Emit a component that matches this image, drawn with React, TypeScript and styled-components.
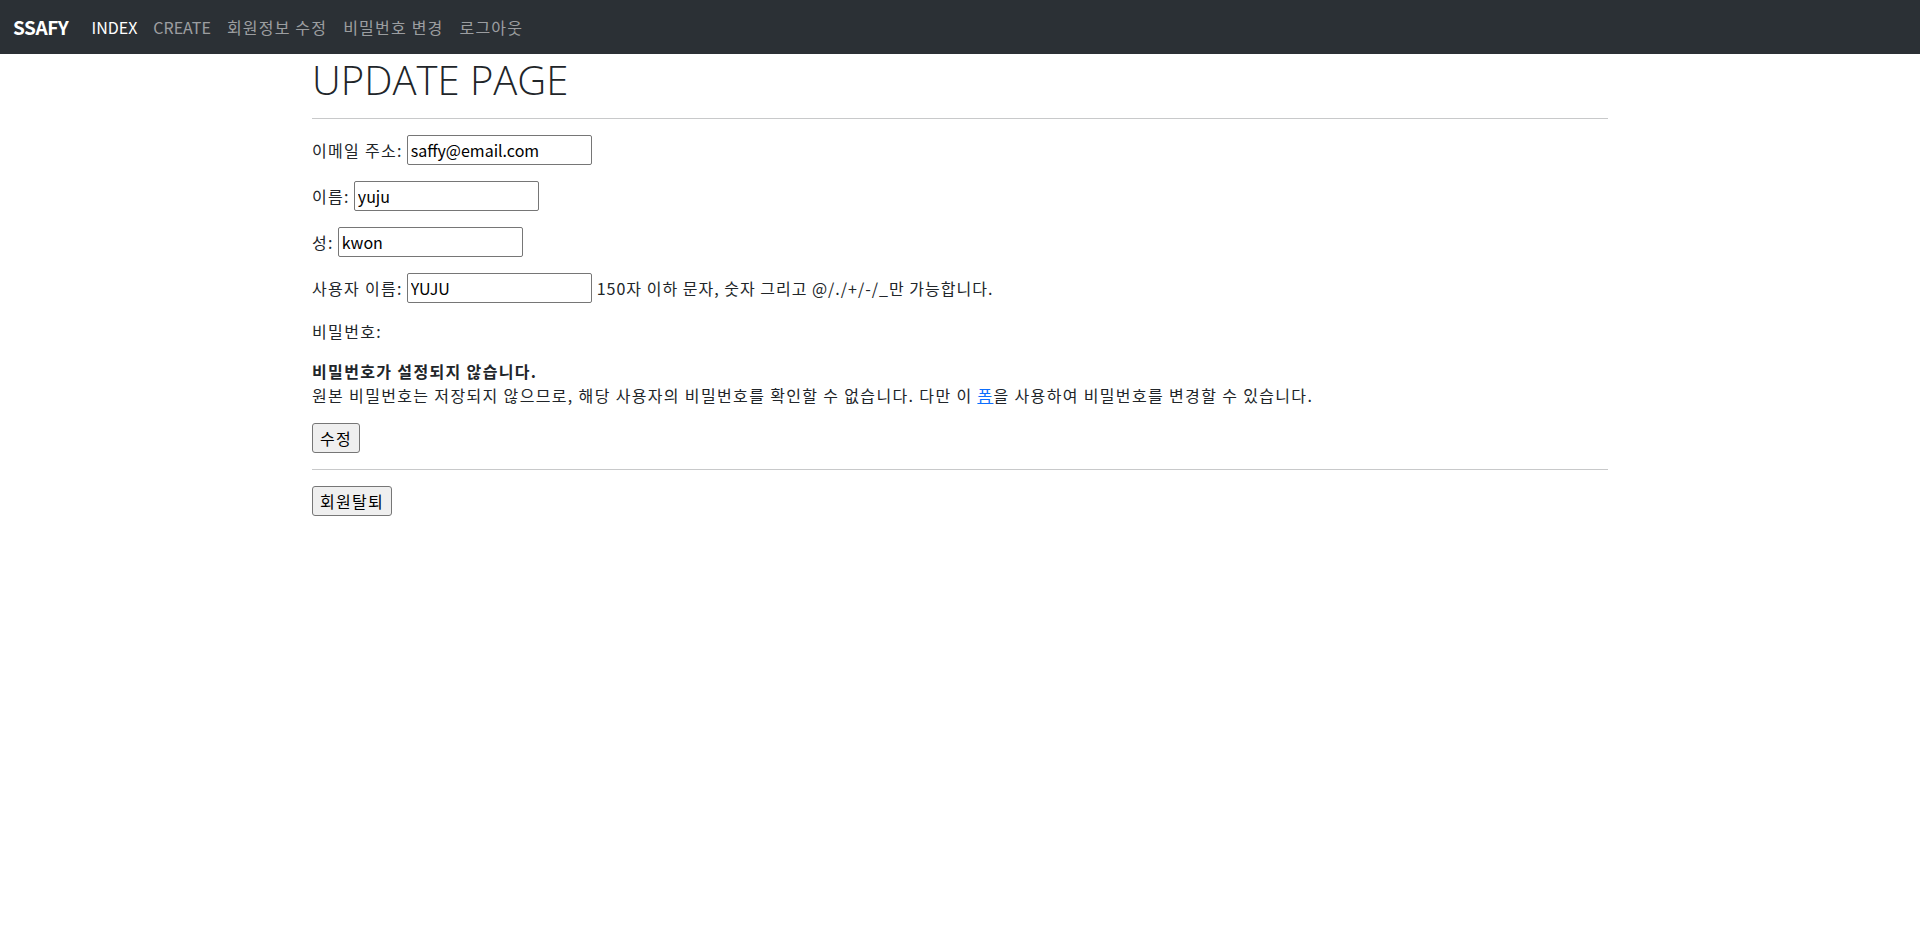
import styled, { createGlobalStyle } from "styled-components";

const GlobalStyle = createGlobalStyle`
  * {
    box-sizing: border-box;
  }
  body {
    margin: 0;
    font-family: "Noto Sans CJK KR", "Noto Sans", sans-serif;
    font-size: 16px;
    line-height: 24px;
    letter-spacing: 1.3px;
    color: #212529;
    background: #fff;
  }
`;

const Navbar = styled.nav`
  display: flex;
  align-items: center;
  height: 54px;
  padding: 0 13px;
  background: #2b3035;
`;

const Brand = styled.a`
  font-size: 19px;
  font-weight: 700;
  letter-spacing: -0.4px;
  color: #fff;
  margin-right: 15px;
  text-decoration: none;
`;

const NavList = styled.div`
  display: flex;
`;

const NavLink = styled.a<{ $active?: boolean; $latin?: boolean }>`
  padding: 8px;
  color: ${(p) => (p.$active ? "#fff" : "rgba(255, 255, 255, 0.55)")};
  letter-spacing: ${(p) => (p.$latin ? "0" : "1.2px")};
  text-decoration: none;
`;

const Container = styled.main`
  width: 1320px;
  margin: 0 auto;
  padding: 0 12px;
`;

const Title = styled.h1`
  margin: 0;
  padding-top: 4px;
  font-family: "Open Sans", "Noto Sans", sans-serif;
  font-size: 40px;
  font-weight: 300;
  line-height: 44px;
  letter-spacing: 0;
`;

const Divider = styled.hr`
  margin: 16px 0;
  border: 0;
  border-top: 1px solid #c8c9ca;
`;

const Field = styled.p`
  margin: 0 0 16px;
  display: flex;
  align-items: center;
  gap: 4px;
  min-height: 30px;
`;

const Text = styled.p`
  margin: 0 0 16px;
  letter-spacing: 1.35px;
`;

const Input = styled.input`
  width: 185px;
  height: 30px;
  padding: 1px 3px;
  font: inherit;
  letter-spacing: 0;
  color: #000;
  border: 1px solid #767676;
  border-radius: 2px;
  background: #fff;
`;

const Help = styled.span`
  margin-left: 1px;
  letter-spacing: 1px;
`;

const Button = styled.button`
  height: 30px;
  padding: 0 7px;
  font: inherit;
  letter-spacing: 1.3px;
  color: #000;
  background: #efefef;
  border: 1px solid #767676;
  border-radius: 3px;
`;

const Link = styled.a`
  color: #0d6efd;
  text-decoration: underline;
`;

const fields = [
  { label: "이메일 주소:", value: "saffy@email.com" },
  { label: "이름:", value: "yuju" },
  { label: "성:", value: "kwon" },
  {
    label: "사용자 이름:",
    value: "YUJU",
    help: "150자 이하 문자, 숫자 그리고 @/./+/-/_만 가능합니다.",
  },
];

export default function App() {
  return (
    <>
      <GlobalStyle />
      <Navbar>
        <Brand href="#">SSAFY</Brand>
        <NavList>
          <NavLink $active $latin href="#">INDEX</NavLink>
          <NavLink $latin href="#">CREATE</NavLink>
          <NavLink href="#">회원정보 수정</NavLink>
          <NavLink href="#">비밀번호 변경</NavLink>
          <NavLink href="#">로그아웃</NavLink>
        </NavList>
      </Navbar>
      <Container>
        <Title>UPDATE PAGE</Title>
        <Divider />
        <form>
          {fields.map((f) => (
            <Field key={f.label}>
              <label>{f.label}</label>
              <Input defaultValue={f.value} />
              {f.help && <Help>{f.help}</Help>}
            </Field>
          ))}
          <Text>비밀번호:</Text>
          <Text>
            <strong>비밀번호가 설정되지 않습니다.</strong>
            <br />
            원본 비밀번호는 저장되지 않으므로, 해당 사용자의 비밀번호를 확인할 수
            없습니다. 다만 이 <Link href="#">폼</Link>을 사용하여 비밀번호를
            변경할 수 있습니다.
          </Text>
          <Button type="button">수정</Button>
        </form>
        <Divider />
        <Button type="button">회원탈퇴</Button>
      </Container>
    </>
  );
}
